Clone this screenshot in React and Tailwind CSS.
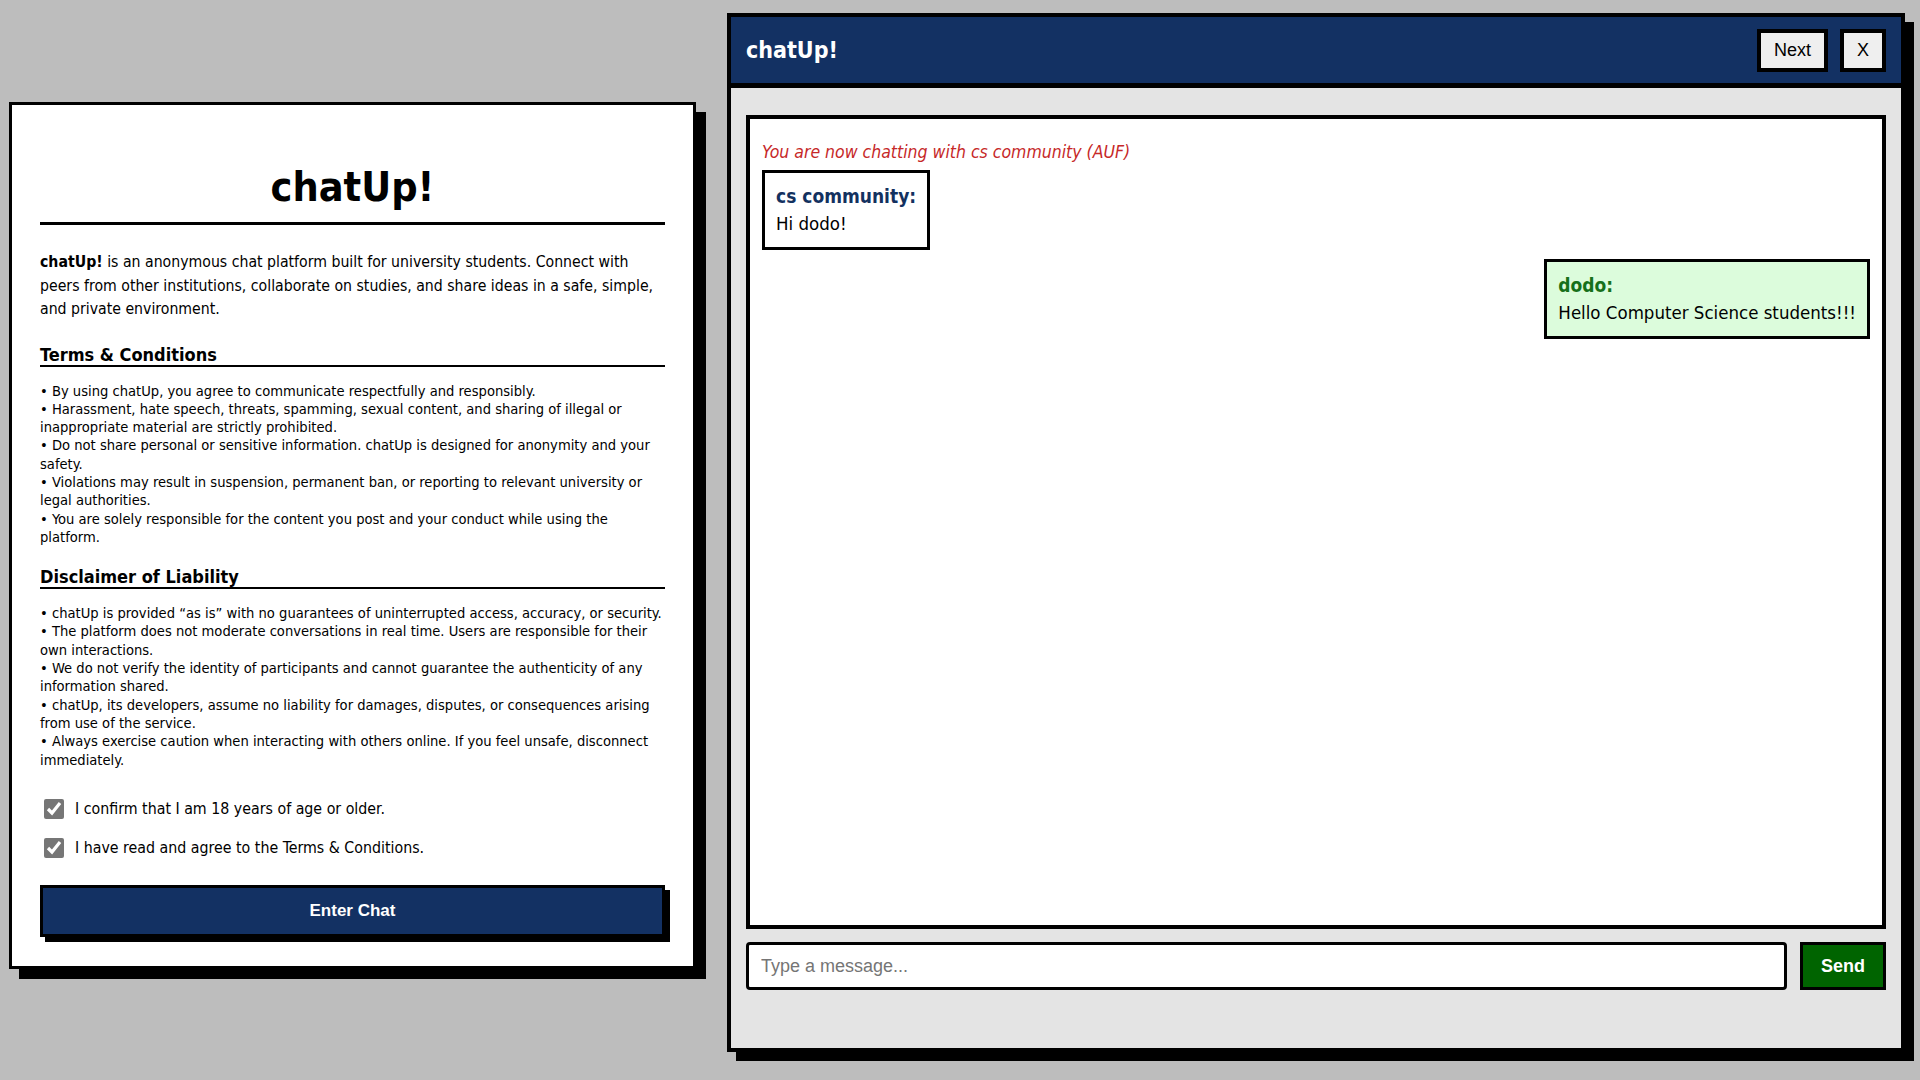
const TERMS = [
  'By using chatUp, you agree to communicate respectfully and responsibly.',
  'Harassment, hate speech, threats, spamming, sexual content, and sharing of illegal or inappropriate material are strictly prohibited.',
  'Do not share personal or sensitive information. chatUp is designed for anonymity and your safety.',
  'Violations may result in suspension, permanent ban, or reporting to relevant university or legal authorities.',
  'You are solely responsible for the content you post and your conduct while using the platform.',
]

const DISCLAIMER = [
  'chatUp is provided \u201Cas is\u201D with no guarantees of uninterrupted access, accuracy, or security.',
  'The platform does not moderate conversations in real time. Users are responsible for their own interactions.',
  'We do not verify the identity of participants and cannot guarantee the authenticity of any information shared.',
  'chatUp, its developers, assume no liability for damages, disputes, or consequences arising from use of the service.',
  'Always exercise caution when interacting with others online. If you feel unsafe, disconnect immediately.',
]

function TermsPanel() {
  return (
    <section className="mt-[102px] w-[687px] shrink-0 border-[3px] border-black bg-white px-[28px] pt-[28px] pb-[29px] shadow-[10px_10px_0_#000]">
      <h1 className="mt-[31px] border-b-[3px] border-black pb-3 text-center text-[41px] font-bold leading-[46px]">chatUp!</h1>
      <p className="mt-[25px] text-[15.7px] leading-[23.5px]">
        <b>chatUp!</b> is an anonymous chat platform built for university students. Connect with peers from other institutions, collaborate on studies, and share ideas in a safe, simple, and private environment.
      </p>

      <h2 className="mt-[23px] border-b-2 border-black text-[18px] font-bold leading-[21px]">Terms &amp; Conditions</h2>
      <ul className="mt-[15px] text-[14.6px] leading-[18.3px]">
        {TERMS.map((t, i) => <li key={i}>• {t}</li>)}
      </ul>

      <h2 className="mt-[20px] border-b-2 border-black text-[18px] font-bold leading-[21px]">Disclaimer of Liability</h2>
      <ul className="mt-[15px] text-[14.6px] leading-[18.3px]">
        {DISCLAIMER.map((t, i) => <li key={i}>• {t}</li>)}
      </ul>

      <label className="mt-[28px] flex h-6 items-center gap-[11px] text-[15.8px]">
        <input type="checkbox" defaultChecked className="ml-1 h-5 w-5 accent-[#767676]" />
        I confirm that I am 18 years of age or older.
      </label>
      <label className="mt-[15px] flex h-6 items-center gap-[11px] text-[15.8px]">
        <input type="checkbox" defaultChecked className="ml-1 h-5 w-5 accent-[#767676]" />
        I have read and agree to the Terms &amp; Conditions.
      </label>

      <button className="mt-[25px] block h-[52px] w-full border-[3px] border-black bg-[#133163] font-['Liberation_Sans',Arial,sans-serif] text-[17px] font-bold text-white shadow-[5px_5px_0_#000]">
        Enter Chat
      </button>
    </section>
  )
}

function Bubble({ name, text, nameColor, className }) {
  return (
    <div className={'border-[3px] border-black px-[11px] py-[11px] ' + className}>
      <p className={'text-[19px] font-bold leading-[24px] ' + nameColor}>{name}</p>
      <p className="mt-1 text-[18.5px] leading-[24px]">{text}</p>
    </div>
  )
}

function ChatPanel() {
  return (
    <section className="mt-[13px] ml-[31px] flex h-[1039px] w-[1178px] shrink-0 flex-col border-4 border-black bg-[#e4e4e4] shadow-[9px_9px_0_#000]">
      <header className="flex h-[71px] shrink-0 items-center justify-between border-b-[5px] border-black bg-[#133163] px-[15px]">
        <span className="text-[23px] font-bold text-white">chatUp!</span>
        <div className="flex gap-3 font-['Liberation_Sans',Arial,sans-serif] text-[18px]">
          <button className="h-[43px] border-4 border-black bg-[#efefef] px-[13px]">Next</button>
          <button className="h-[43px] border-4 border-black bg-[#efefef] px-[13px]">X</button>
        </div>
      </header>

      <div className="px-[15px] pt-[27px]">
        <div className="flex h-[814px] flex-col items-start border-4 border-black bg-white p-3">
          <p className="mt-[10px] mb-[7px] text-[17.5px] leading-[22px] text-[#c62828] italic">You are now chatting with cs community (AUF)</p>
          <Bubble name="cs community:" text="Hi dodo!" nameColor="text-[#13315f]" className="bg-white" />
          <Bubble name="dodo:" text="Hello Computer Science students!!!" nameColor="text-[#16701a]" className="mt-[9px] self-end bg-[#dcfcdc]" />
        </div>

        <div className="mt-[13px] flex gap-[13px] font-['Liberation_Sans',Arial,sans-serif] text-[18px]">
          <input
            type="text"
            placeholder="Type a message..."
            className="h-12 flex-1 rounded border-[3px] border-black bg-white px-3 outline-none placeholder:text-[#757575]"
          />
          <button className="h-12 w-[86px] border-[3px] border-black bg-[#006400] font-bold text-white">Send</button>
        </div>
      </div>
    </section>
  )
}

export default function App() {
  return (
    <div className="flex h-screen items-start overflow-hidden bg-[#bdbdbd] pl-[9px] font-['DejaVu_Sans_Condensed','DejaVu_Sans',sans-serif] text-black">
      <TermsPanel />
      <ChatPanel />
    </div>
  )
}
